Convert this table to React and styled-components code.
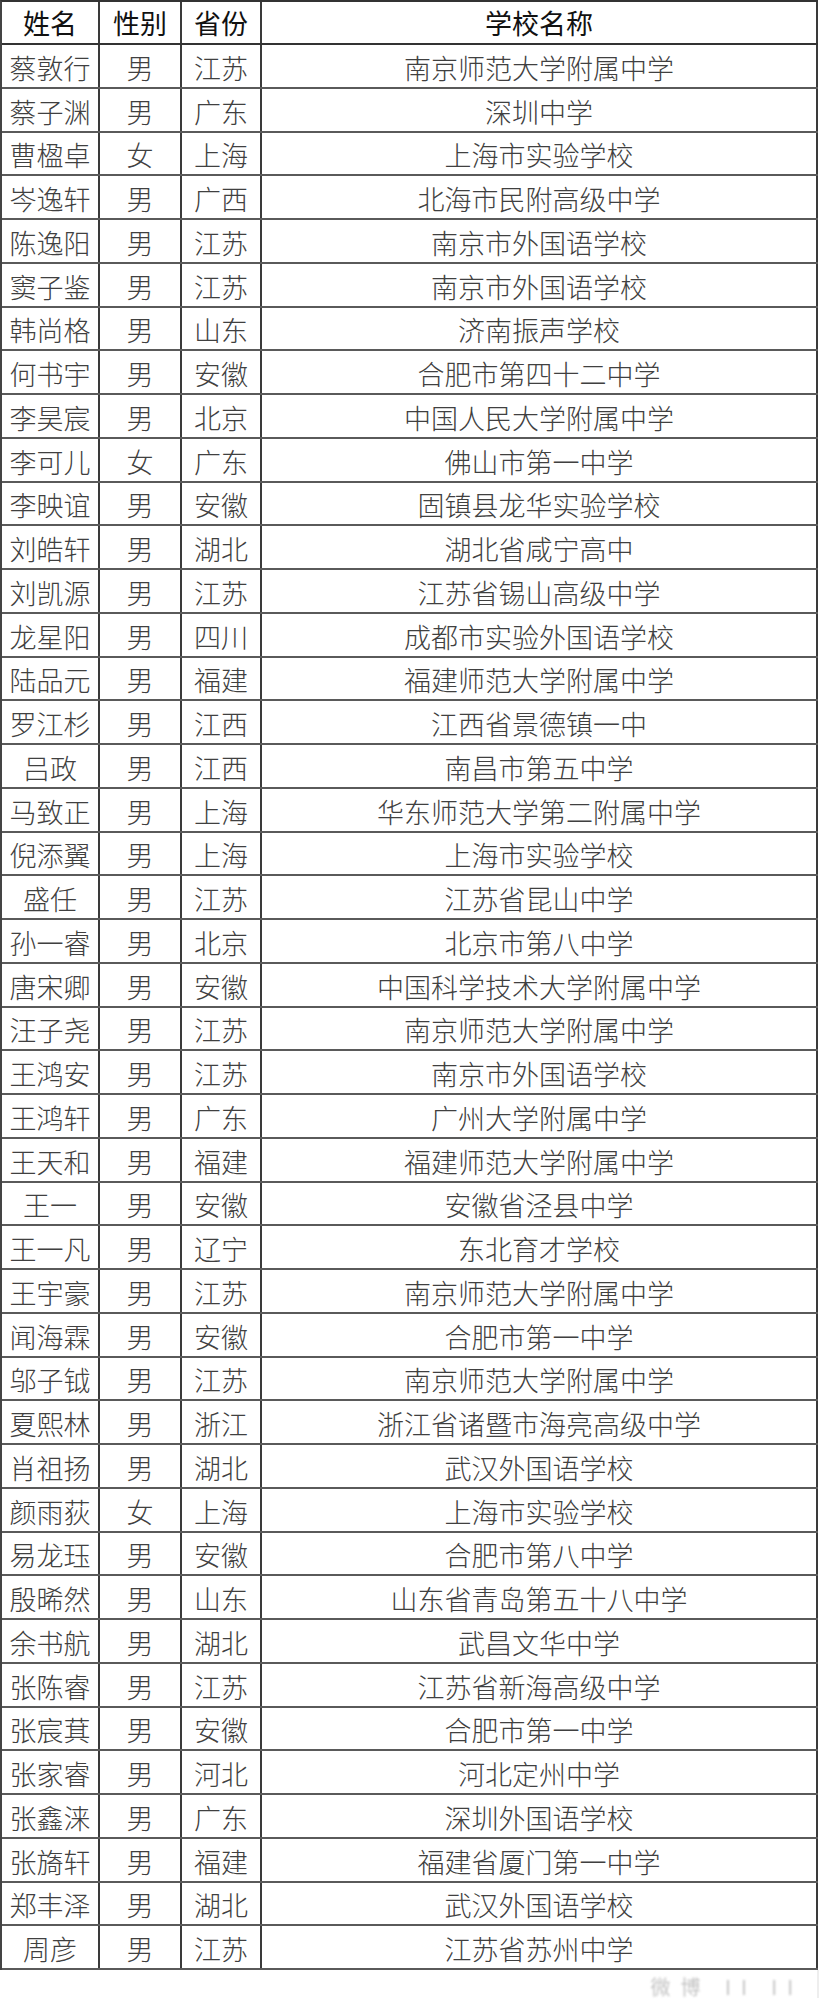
import React from "react";
import styled, { createGlobalStyle } from "styled-components";

const GlobalStyle = createGlobalStyle`
    html, body {
        margin: 0;
        padding: 0;
        background: #fff;
    }
    body {
        font-family: "Noto Sans CJK SC", "Noto Sans", sans-serif;
    }
`

const rows = [
    ["蔡敦行", "男", "江苏", "南京师范大学附属中学"],
    ["蔡子渊", "男", "广东", "深圳中学"],
    ["曹楹卓", "女", "上海", "上海市实验学校"],
    ["岑逸轩", "男", "广西", "北海市民附高级中学"],
    ["陈逸阳", "男", "江苏", "南京市外国语学校"],
    ["窦子鉴", "男", "江苏", "南京市外国语学校"],
    ["韩尚格", "男", "山东", "济南振声学校"],
    ["何书宇", "男", "安徽", "合肥市第四十二中学"],
    ["李昊宸", "男", "北京", "中国人民大学附属中学"],
    ["李可儿", "女", "广东", "佛山市第一中学"],
    ["李映谊", "男", "安徽", "固镇县龙华实验学校"],
    ["刘皓轩", "男", "湖北", "湖北省咸宁高中"],
    ["刘凯源", "男", "江苏", "江苏省锡山高级中学"],
    ["龙星阳", "男", "四川", "成都市实验外国语学校"],
    ["陆品元", "男", "福建", "福建师范大学附属中学"],
    ["罗江杉", "男", "江西", "江西省景德镇一中"],
    ["吕政", "男", "江西", "南昌市第五中学"],
    ["马致正", "男", "上海", "华东师范大学第二附属中学"],
    ["倪添翼", "男", "上海", "上海市实验学校"],
    ["盛任", "男", "江苏", "江苏省昆山中学"],
    ["孙一睿", "男", "北京", "北京市第八中学"],
    ["唐宋卿", "男", "安徽", "中国科学技术大学附属中学"],
    ["汪子尧", "男", "江苏", "南京师范大学附属中学"],
    ["王鸿安", "男", "江苏", "南京市外国语学校"],
    ["王鸿轩", "男", "广东", "广州大学附属中学"],
    ["王天和", "男", "福建", "福建师范大学附属中学"],
    ["王一", "男", "安徽", "安徽省泾县中学"],
    ["王一凡", "男", "辽宁", "东北育才学校"],
    ["王宇豪", "男", "江苏", "南京师范大学附属中学"],
    ["闻海霖", "男", "安徽", "合肥市第一中学"],
    ["邬子钺", "男", "江苏", "南京师范大学附属中学"],
    ["夏熙林", "男", "浙江", "浙江省诸暨市海亮高级中学"],
    ["肖祖扬", "男", "湖北", "武汉外国语学校"],
    ["颜雨荻", "女", "上海", "上海市实验学校"],
    ["易龙珏", "男", "安徽", "合肥市第八中学"],
    ["殷晞然", "男", "山东", "山东省青岛第五十八中学"],
    ["余书航", "男", "湖北", "武昌文华中学"],
    ["张陈睿", "男", "江苏", "江苏省新海高级中学"],
    ["张宸萁", "男", "安徽", "合肥市第一中学"],
    ["张家睿", "男", "河北", "河北定州中学"],
    ["张鑫涞", "男", "广东", "深圳外国语学校"],
    ["张旖轩", "男", "福建", "福建省厦门第一中学"],
    ["郑丰泽", "男", "湖北", "武汉外国语学校"],
    ["周彦", "男", "江苏", "江苏省苏州中学"],
]

const Page = styled.div`
    width: 821px;
    min-height: 2001px;
    background: #fff;
`

const Table = styled.div`
    width: 818px;
    border-top: 2px solid #333;
    border-left: 2px solid #444;
    box-sizing: border-box;
`

const Row = styled.div`
    display: grid;
    grid-template-columns: 98px 82px 80px 556px;
    height: ${p => (p.$head ? "43px" : "43.75px")};
    border-bottom: 2px solid ${p => (p.$head ? "#333" : "#5a5a5a")};
    box-sizing: border-box;
`

const Cell = styled.div`
    display: flex;
    align-items: center;
    justify-content: center;
    border-right: 2px solid #3a3a3a;
    box-sizing: border-box;
    font-size: 27px;
    line-height: 1;
    white-space: nowrap;
    padding-top: ${p => (p.$head ? "0" : "3px")};
    color: ${p => (p.$head ? "#111" : "#404040")};
    font-weight: ${p => (p.$head ? 400 : 300)};
`

const Footer = styled.div`
    display: flex;
    justify-content: flex-end;
    padding: 2px 14px 0 0;
    border-right: 2px solid #eee;
    height: 28px;
    width: 819px;
    box-sizing: border-box;
`

const Watermark = styled.div`
    font-size: 20px;
    letter-spacing: 10px;
    color: #aaa;
    filter: blur(1.2px);
    opacity: 0.7;
`

const App = () => {
    return (
        <Page>
            <GlobalStyle />
            <Table>
                <Row $head>
                    <Cell $head>姓名</Cell>
                    <Cell $head>性别</Cell>
                    <Cell $head>省份</Cell>
                    <Cell $head>学校名称</Cell>
                </Row>
                {rows.map((r, i) => (
                    <Row key={i}>
                        {r.map((c, j) => (
                            <Cell key={j}>{c}</Cell>
                        ))}
                    </Row>
                ))}
            </Table>
            <Footer>
                <Watermark>微博 II II</Watermark>
            </Footer>
        </Page>
    )
}

export default App;
